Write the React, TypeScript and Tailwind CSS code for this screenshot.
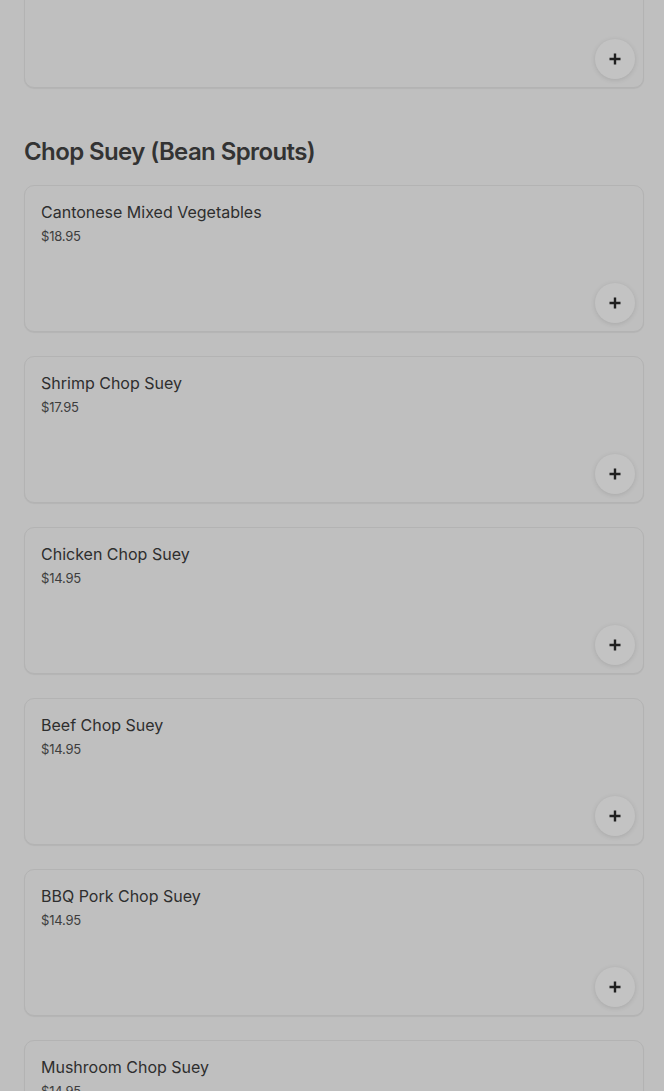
import React from "react";

type Item = { name: string; price: string };

const items: Item[] = [
  { name: "Cantonese Mixed Vegetables", price: "$18.95" },
  { name: "Shrimp Chop Suey", price: "$17.95" },
  { name: "Chicken Chop Suey", price: "$14.95" },
  { name: "Beef Chop Suey", price: "$14.95" },
  { name: "BBQ Pork Chop Suey", price: "$14.95" },
  { name: "Mushroom Chop Suey", price: "$14.95" },
];

function PlusIcon() {
  return (
    <svg width="14" height="14" viewBox="0 0 14 14" fill="none">
      <path d="M7 1.5v11M1.5 7h11" stroke="#1f1f1f" strokeWidth="2.4" />
    </svg>
  );
}

function Card({ item }: { item: Item }) {
  return (
    <div className="flex h-[147px] flex-col rounded-[10px] border border-[#b3b3b3] bg-[#bfbfbf] shadow-[0_1px_1px_rgba(0,0,0,0.06)]">
      <div className="flex flex-col px-4 pt-4">
        <div className="text-[16px] leading-5 text-[#2e2e2e]">{item.name}</div>
        <div className="mt-1 text-[13px] leading-5 tracking-[-0.2px] text-[#3d3d3d]">{item.price}</div>
      </div>
      <div className="flex flex-1 items-end justify-end p-2">
        <button className="flex h-10 w-10 items-center justify-center rounded-full bg-[#c3c3c3] shadow-[0_1px_5px_rgba(0,0,0,0.12)]">
          <PlusIcon />
        </button>
      </div>
    </div>
  );
}

export default function App() {
  return (
    <div
      className="min-h-[1091px] overflow-hidden bg-[#bfbfbf] pl-6 pr-5"
      style={{ fontFamily: "Inter, 'Noto Sans', sans-serif" }}
    >
      <div className="-mt-[59px]">
        <Card item={{ name: "Vegetable Chow Mein", price: "$14.95" }} />
      </div>
      <h2 className="mt-12 mb-[17px] text-[24px] font-semibold leading-8 tracking-[-0.6px] text-[#333333]">
        Chop Suey (Bean Sprouts)
      </h2>
      <div className="flex flex-col gap-6">
        {items.map((it) => (
          <Card key={it.name} item={it} />
        ))}
      </div>
    </div>
  );
}
